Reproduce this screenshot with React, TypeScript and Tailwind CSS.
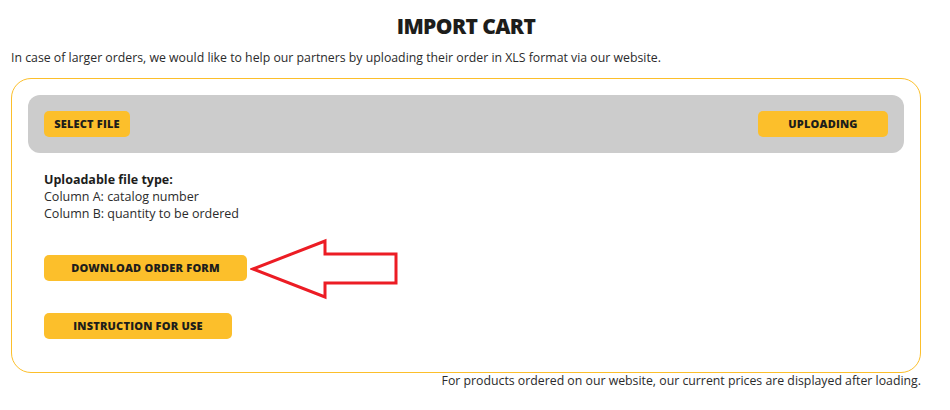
import React from 'react';

const YellowButton = ({ label, className = '' }: { label: string; className?: string }) => (
  <button
    className={`h-[26px] rounded-[5px] bg-[#fcbf2b] text-[11px] font-extrabold tracking-[0.2px] text-[#1d1d1b] ${className}`}
  >
    {label}
  </button>
);

const Arrow = () => (
  <svg className="absolute left-[250px] top-[238px]" width="150" height="62" viewBox="250 238 150 62">
    <polygon
      points="253,269 325,241 325,254 396,254 396,283 325,283 325,297"
      fill="none"
      stroke="#ec1c24"
      strokeWidth="3"
    />
  </svg>
);

const App = () => {
  return (
    <div
      className="relative h-[410px] w-[950px] bg-white text-[#2b2b2b]"
      style={{ fontFamily: '"Open Sans", Arial, sans-serif' }}
    >
      <h1 className="pt-[12px] pr-[18px] text-center text-[21px] font-extrabold leading-[28px] tracking-[-0.6px] text-[#1d1d1b]">
        IMPORT CART
      </h1>
      <p className="mt-[9px] pl-[11px] text-[12.3px] leading-[18px]">
        In case of larger orders, we would like to help our partners by uploading their order in XLS format via our website.
      </p>

      <div className="mt-[11px] ml-[11px] w-[910px] rounded-[20px] border-[1.5px] border-[#fcbf2b] pt-[16px] pb-[33px]">
        <div className="mx-[16px] flex h-[58px] items-center justify-between rounded-[12px] bg-[#cccccc] px-[16px]">
          <YellowButton label="SELECT FILE" className="w-[86px]" />
          <YellowButton label="UPLOADING" className="w-[130px]" />
        </div>

        <div className="mt-[18px] pl-[32px] text-[12.5px] leading-[17px]">
          <div className="font-bold text-[#1d1d1b]">Uploadable file type:</div>
          <div>Column A: catalog number</div>
          <div>Column B: quantity to be ordered</div>
        </div>

        <div className="mt-[33px] flex flex-col items-start gap-[32px] pl-[32px]">
          <YellowButton label="DOWNLOAD ORDER FORM" className="w-[203px]" />
          <YellowButton label="INSTRUCTION FOR USE" className="w-[188px]" />
        </div>
      </div>

      <p className="mt-[-1px] w-[921px] text-right text-[12.3px] leading-[18px]">
        For products ordered on our website, our current prices are displayed after loading.
      </p>

      <Arrow />
    </div>
  );
};

export default App;
